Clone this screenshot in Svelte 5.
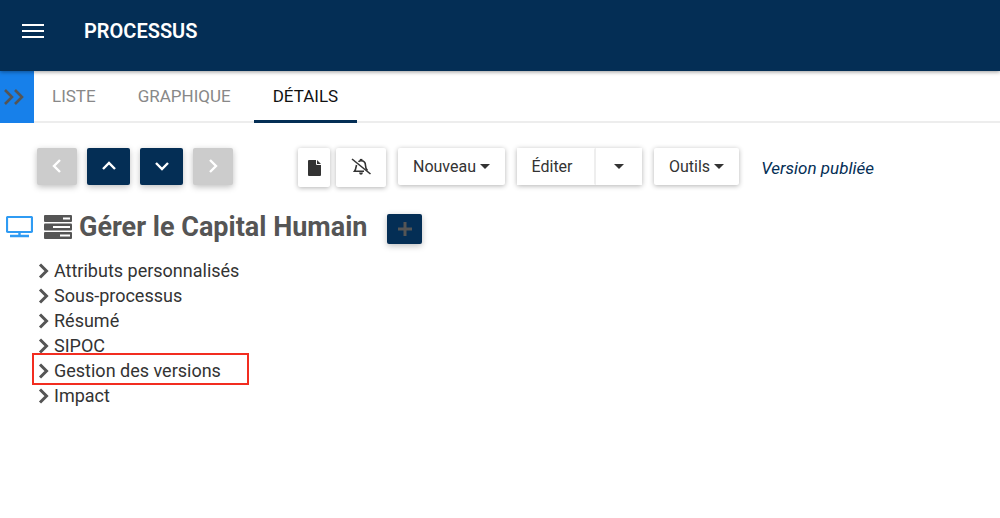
<script lang="ts">
  const tabs = ["LISTE", "GRAPHIQUE", "DÉTAILS"];
  const sections = [
    "Attributs personnalisés",
    "Sous-processus",
    "Résumé",
    "SIPOC",
    "Gestion des versions",
    "Impact",
  ];

  let activeTab = $state("DÉTAILS");
  let highlighted = $state("Gestion des versions");
</script>

<header class="topbar">
  <button class="menu" aria-label="Menu">
    <svg width="22" height="16" viewBox="0 0 22 16">
      <path d="M0 2h22M0 8h22M0 14h22" stroke="#fff" stroke-width="2" />
    </svg>
  </button>
  <h1>PROCESSUS</h1>
</header>

<nav class="tabs">
  <button class="expand" aria-label="Ouvrir le panneau">
    <svg width="22" height="18" viewBox="0 0 22 18">
      <path
        d="M2 2l7 7-7 7M12 2l7 7-7 7"
        fill="none"
        stroke="#555"
        stroke-width="2.6"
      />
    </svg>
  </button>
  <div class="tab-list">
    {#each tabs as tab}
      <button
        class="tab"
        class:active={tab === activeTab}
        onclick={() => (activeTab = tab)}>{tab}</button
      >
    {/each}
  </div>
</nav>

<main>
  <div class="toolbar">
    <div class="arrows">
      <button class="arrow narrow" disabled aria-label="Précédent">
        <svg width="16" height="16" viewBox="0 0 16 16"><path d="M11 1L5 7l6 6" /></svg>
      </button>
      <button class="arrow" aria-label="Monter">
        <svg width="16" height="16" viewBox="0 0 16 16"><path d="M2 10l6-6 6 6" /></svg>
      </button>
      <button class="arrow" aria-label="Descendre">
        <svg width="16" height="16" viewBox="0 0 16 16"><path d="M2 4l6 6 6-6" /></svg>
      </button>
      <button class="arrow narrow" disabled aria-label="Suivant">
        <svg width="16" height="16" viewBox="0 0 16 16"><path d="M5 1l6 6-6 6" /></svg>
      </button>
    </div>

    <div class="actions">
      <div class="icons">
        <button class="white doc" aria-label="Document">
          <svg width="13" height="17" viewBox="0 0 13 17">
            <path
              d="M1 1h7v4q0 1 1 1h4v10q0 1-1 1H1q-1 0-1-1V2q0-1 1-1zM9 1l4 4H9z"
              fill="#333"
            />
          </svg>
        </button>
        <button class="white bell" aria-label="Notifications désactivées">
          <svg width="20" height="20" viewBox="0 0 20 20" fill="none" stroke="#333">
            <path
              d="M5.500 7C5 9.500 4.800 11.500 3.500 13.200H13M7.500 3.800C8.300 3 9 2.800 10 2.800C13 2.800 14.500 4.800 14.500 7.500C14.500 9.500 15 11 16.500 12.500"
              stroke-width="1.6"
            />
            <path d="M8.800 1.800h2.600" stroke-width="1.8" />
            <path d="M8 14.500h4q-.4 2.300-2 2.300t-2-2.300z" fill="#333" stroke="none" />
            <path d="M1 1L19.500 16" stroke-width="1.6" />
          </svg>
        </button>
      </div>
      <button class="white">Nouveau<span class="caret"></span></button>
      <div class="split">
        <button class="white edit">Éditer</button>
        <button class="white more" aria-label="Plus d'options d'édition">
          <span class="caret"></span>
        </button>
      </div>
      <button class="white">Outils<span class="caret"></span></button>
    </div>
    <em>Version publiée</em>
  </div>

  <div class="heading">
    <svg class="monitor" width="27" height="22" viewBox="0 0 27 22">
      <rect x="1" y="1" width="25" height="15" rx="1" fill="none" stroke="#2f9bf3" stroke-width="2.2" />
      <path d="M13.500 16v4M4 20h19" stroke="#2f9bf3" stroke-width="2.4" />
    </svg>
    <svg class="server" width="28" height="24" viewBox="0 0 28 24">
      <g fill="#555">
        <rect width="28" height="7" rx="1" />
        <rect y="8.500" width="28" height="7" rx="1" />
        <rect y="17" width="28" height="7" rx="1" />
      </g>
      <path d="M19 3.500h7M9 12h17M16 20.500h10" stroke="#fff" stroke-width="1.8" />
    </svg>
    <h2>Gérer le Capital Humain</h2>
    <button class="add" aria-label="Ajouter">
      <svg width="14" height="14" viewBox="0 0 14 14">
        <path d="M7 0v14M0 7h14" stroke="#555" stroke-width="3" />
      </svg>
    </button>
  </div>

  <ul>
    {#each sections as section}
      <li>
        <button
          class="section"
          class:highlighted={section === highlighted}
          onclick={() => (highlighted = section)}
        >
          <svg width="11" height="16" viewBox="0 0 11 16">
            <path d="M2 1.500l6.500 6.500L2 14.500" fill="none" stroke="#555" stroke-width="3" />
          </svg>
          {section}
        </button>
      </li>
    {/each}
  </ul>
</main>

<style>
  :global(body) {
    margin: 0;
    background: #fff;
    color: #333;
    font-family: Roboto, sans-serif;
  }

  button {
    display: flex;
    align-items: center;
    justify-content: center;
    padding: 0;
    border: 0;
    background: none;
    color: inherit;
    font: inherit;
    cursor: pointer;
  }

  h1,
  h2,
  ul {
    margin: 0;
    padding: 0;
  }

  .topbar {
    position: relative;
    display: flex;
    align-items: center;
    gap: 40px;
    height: 71px;
    padding: 0 22px 10px;
    box-sizing: border-box;
    background: #042e55;
    box-shadow: 0 1px 4px rgba(0, 0, 0, 0.4);
  }

  h1 {
    color: #fff;
    font-size: 20px;
    font-weight: 600;
    line-height: 24px;
  }

  .tabs {
    display: flex;
    height: 52px;
    box-shadow: inset 0 -2px #ededed;
  }

  .expand {
    width: 34px;
    padding-right: 6px;
    background: #1780ea;
  }

  .tab-list {
    display: flex;
    gap: 4px;
  }

  .tab {
    padding: 0 19px;
    border-bottom: 3px solid transparent;
    color: #888;
    font-size: 17px;
  }

  .tab:first-child {
    padding-left: 18px;
  }

  .tab.active {
    border-color: #042e55;
    color: #111;
  }

  .toolbar {
    display: flex;
    align-items: flex-start;
    padding: 25px 37px 0;
    font-size: 16px;
  }

  .arrows {
    display: flex;
    gap: 10px;
  }

  .arrow {
    width: 43px;
    height: 37px;
    border-radius: 2px;
    background: #042e55;
    box-shadow: 0 2px 6px rgba(0, 0, 0, 0.25);
  }

  .arrow.narrow {
    width: 40px;
  }

  .arrow:disabled {
    background: #ccc;
    cursor: default;
  }

  .arrow path {
    fill: none;
    stroke: #fff;
    stroke-width: 2.4;
  }

  .actions {
    display: flex;
    align-items: flex-start;
    gap: 12px;
    margin-left: 65px;
  }

  .icons {
    display: flex;
    gap: 6px;
  }

  .white {
    height: 37px;
    padding: 0 15px;
    border-radius: 2px;
    background: #fff;
    box-shadow: 0 1px 5px rgba(0, 0, 0, 0.3);
  }

  .doc {
    width: 32px;
    height: 39px;
    padding: 0;
  }

  .bell {
    width: 50px;
    height: 39px;
    padding: 0;
  }

  .split {
    display: flex;
    box-shadow: 0 1px 5px rgba(0, 0, 0, 0.3);
  }

  .split .white {
    box-shadow: none;
  }

  .edit {
    width: 77px;
    padding: 0 7px 0 0;
  }

  .more {
    width: 48px;
    border-left: 2px solid #eee;
  }

  .caret {
    margin-left: 4px;
    border: 5px solid transparent;
    border-top-color: #333;
    border-bottom: 0;
  }

  .more .caret {
    margin-left: 0;
  }

  em {
    margin-left: 22px;
    color: #042e55;
    font-size: 17px;
    line-height: 41px;
  }

  .heading {
    display: flex;
    align-items: center;
    padding: 20px 6px 0;
    color: #555;
  }

  .server {
    margin: 0 7px 0 11px;
  }

  h2 {
    font-size: 27px;
    font-weight: 700;
    line-height: 36px;
  }

  .add {
    width: 35px;
    height: 30px;
    margin: 4px 0 0 20px;
    border-radius: 2px;
    background: #042e55;
    box-shadow: 0 2px 6px rgba(0, 0, 0, 0.25);
  }

  ul {
    padding: 13px 38px;
    list-style: none;
  }

  .section {
    position: relative;
    gap: 5px;
    height: 25px;
    font-size: 18px;
  }

  .highlighted::after {
    content: "";
    position: absolute;
    inset: -5px -28px -2px -6px;
    border: 2px solid #f22d20;
  }
</style>
